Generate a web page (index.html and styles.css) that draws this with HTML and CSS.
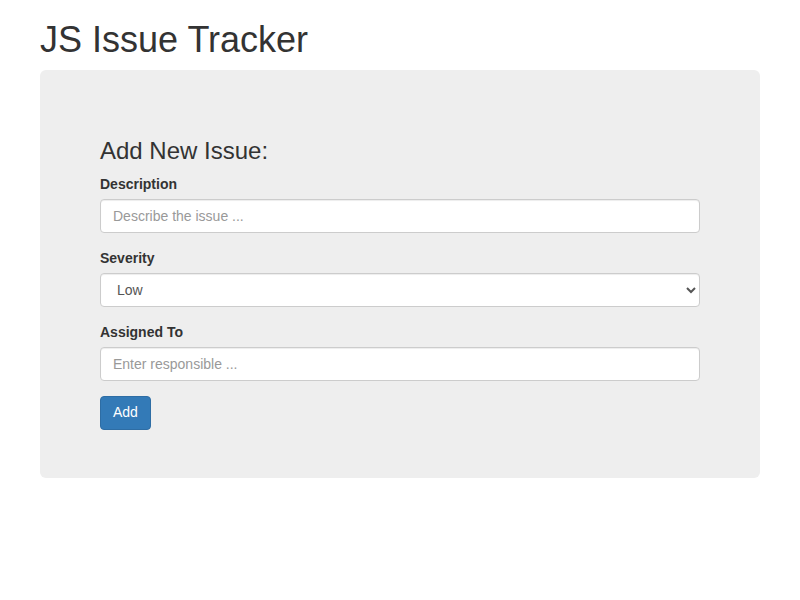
FILE: index.html
```html
<!DOCTYPE html>
<html>
<head>
<meta charset="utf-8">
<title>JS Issue Tracker</title>
<link rel="stylesheet" href="styles.css">
</head>
<body>
<div class="container">
  <h1 class="title">JS Issue Tracker</h1>
  <div class="jumbotron">
    <h3 class="form-title">Add New Issue:</h3>
    <form class="issue-form">
      <div class="form-group">
        <label class="form-label" for="desc">Description</label>
        <input class="form-control" id="desc" type="text" placeholder="Describe the issue ...">
      </div>
      <div class="form-group">
        <label class="form-label" for="sev">Severity</label>
        <select class="form-control select" id="sev">
          <option>Low</option>
          <option>Medium</option>
          <option>High</option>
        </select>
      </div>
      <div class="form-group">
        <label class="form-label" for="assigned">Assigned To</label>
        <input class="form-control" id="assigned" type="text" placeholder="Enter responsible ...">
      </div>
      <button type="button" class="btn-primary">Add</button>
    </form>
  </div>
</div>
</body>
</html>
```
FILE: styles.css
```css
* { box-sizing: border-box; }
html, body { margin: 0; padding: 0; }
body {
  font-family: "Liberation Sans", Arial, Helvetica, sans-serif;
  font-size: 14px;
  line-height: 1.428571;
  color: #333;
  background: #fff;
}
.container {
  width: 750px;
  margin: 0 auto;
  padding: 0 15px;
}
.title {
  font-size: 36px;
  font-weight: 500;
  line-height: 1.1;
  margin: 20px 0 10px;
}
.jumbotron {
  background: #eee;
  border-radius: 6px;
  padding: 48px 60px;
}
.form-title {
  font-size: 24px;
  font-weight: 500;
  line-height: 1.1;
  margin: 20px 0 10px;
}
.form-group {
  margin-bottom: 15px;
}
.form-label {
  display: inline-block;
  margin-bottom: 5px;
  font-weight: 700;
  font-size: 14px;
  line-height: 20px;
}
.form-control {
  display: block;
  width: 100%;
  height: 34px;
  padding: 6px 12px;
  font-family: inherit;
  font-size: 14px;
  line-height: 1.428571;
  color: #555;
  background: #fff;
  border: 1px solid #ccc;
  border-radius: 4px;
  box-shadow: inset 0 1px 1px rgba(0,0,0,.075);
  margin: 0;
}
.form-control::placeholder { color: #999; opacity: 1; }
.select { padding: 6px 8px 6px 12px; }
.btn-primary {
  display: inline-block;
  height: 34px;
  padding: 6px 12px;
  font-family: inherit;
  font-size: 14px;
  line-height: 1.428571;
  color: #fff;
  background: #337ab7;
  border: 1px solid #2e6da4;
  border-radius: 4px;
  cursor: pointer;
}
```
